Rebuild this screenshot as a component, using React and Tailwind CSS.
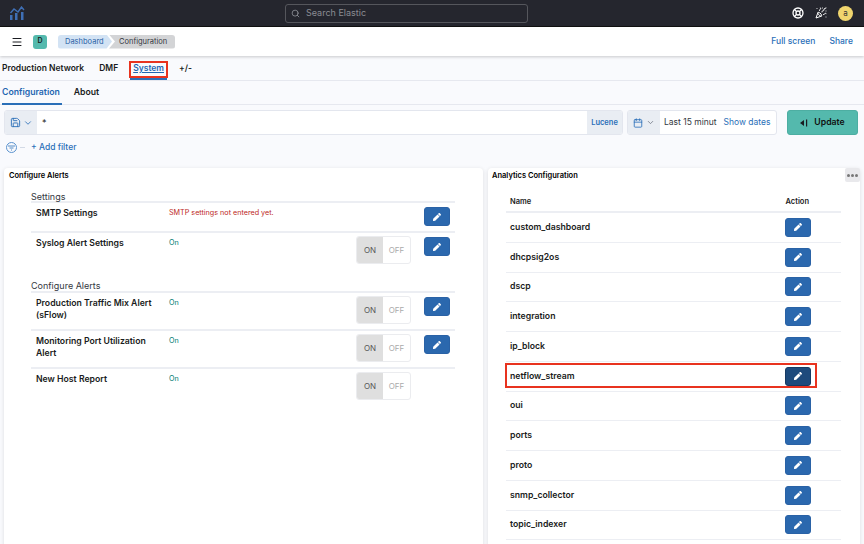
import React from 'react';
import { Calendar, ChevronDown, LifeBuoy, Menu, PartyPopper, Save, Search } from 'lucide-react';
import { FaPen } from 'react-icons/fa';

const Logo = () => (
  <svg width="16" height="15" viewBox="0 0 16 15" fill="none">
    <path d="M1 14V9h2.5v5zM6 14V7h2.5v7zM12 14V6h2.5v8z" fill="#3f6fb5" />
    <path d="M1.5 7 5 3l4 3 3.5-5 2.5 3" stroke="#3f6fb5" strokeWidth="1.4" />
  </svg>
);

const EditButton = ({ dark }) => (
  <button
    className={`w-[26px] h-[19px] shrink-0 rounded-[3px] border flex items-center justify-center text-white ${
      dark ? 'bg-[#1d4a7c] border-[#163a63]' : 'bg-[#2b68ae] border-[#2a62a6]'
    }`}
  >
    <FaPen className="w-[8px] h-[8px]" />
  </button>
);

const Toggle = () => (
  <div className="w-[55px] h-[28px] shrink-0 flex rounded-[3px] border border-[#ebecef] text-[8px] bg-white overflow-hidden">
    <div className="w-[26px] bg-[#dfdfdf] text-[#555] flex items-center justify-center">ON</div>
    <div className="flex-1 text-[#aaa] flex items-center justify-center">OFF</div>
  </div>
);

const AlertRow = ({ name, status, error, toggle, edit, height }) => (
  <div className={`flex border-t-2 border-[#eceef3] pl-[5px] pr-[5px] ${height}`}>
    <div className="w-[125px] mr-[8px] pt-[4px] text-[8.7px] leading-[12px] font-semibold text-[#1a1c21]">{name}</div>
    <div className={`w-[187px] pt-[4px] text-[7.2px] leading-[12px] ${error ? 'text-[#bd271e]' : 'text-[#017d73]'}`}>
      {status}
    </div>
    <div className="w-[68px] pt-[3px]">{toggle && <Toggle />}</div>
    <div className="pt-[4px]">{edit && <EditButton />}</div>
  </div>
);

const analytics = [
  'custom_dashboard',
  'dhcpsig2os',
  'dscp',
  'integration',
  'ip_block',
  'netflow_stream',
  'oui',
  'ports',
  'proto',
  'snmp_collector',
  'topic_indexer',
];

const App = () => {
  return (
    <div className="w-[864px] h-[544px] overflow-hidden bg-[#f9fafd] font-['Inter',sans-serif] text-[#1a1c21] antialiased">
      {/* Top bar */}
      <header className="h-[27px] bg-[#25262e] border-b border-[#111] flex items-center pl-[9px] pr-[11px]">
        <Logo />
        <div className="ml-[260px] w-[243px] h-[19px] rounded-[3px] border border-[#55565c] flex items-center px-[5px] gap-[6px] text-[9px] text-[#8a8c93]">
          <Search className="w-[9px] h-[9px] text-[#9a9ca3]" />
          Search Elastic
        </div>
        <div className="ml-auto flex items-center gap-[11px] text-white">
          <LifeBuoy className="w-[12px] h-[12px]" strokeWidth={2.6} />
          <PartyPopper className="w-[12px] h-[12px]" />
          <div className="w-[15px] h-[15px] rounded-full bg-[#f0d56e] text-[#333] text-[8px] flex items-center justify-center">
            a
          </div>
        </div>
      </header>

      {/* Breadcrumb bar */}
      <div className="h-[29px] bg-white shadow-[0_1px_3px_rgba(0,0,0,0.2)] relative flex items-center pl-[11px] pr-[11px]">
        <Menu className="w-[12px] h-[12px] text-[#1a1c21]" />
        <div className="ml-[10px] w-[14px] h-[14px] rounded-[3px] bg-[#54b9ad] text-[7px] font-semibold flex items-center justify-center">
          D
        </div>
        <div className="ml-[11px] flex items-center text-[7.5px]">
          <div className="w-[54px] h-[14px] pl-[7px] flex items-center bg-[#d3e3f4] text-[#2a62a6] rounded-l-[3px] [clip-path:polygon(0_0,90%_0,100%_50%,90%_100%,0_100%)]">
            Dashboard
          </div>
          <div className="-ml-[3px] w-[66px] h-[14px] pl-[10px] flex items-center bg-[#d3d4d6] text-[#343741] rounded-r-[3px] [clip-path:polygon(0_0,100%_0,100%_100%,0_100%,6px_50%)]">
            Configuration
          </div>
        </div>
        <div className="ml-auto flex gap-[14px] text-[8.5px] text-[#2a6fb8] font-medium">
          <span>Full screen</span>
          <span>Share</span>
        </div>
      </div>

      {/* Main tabs */}
      <div className="h-[25px] border-b border-[#e6e8ef] flex items-center pl-[2px] text-[8.5px] font-semibold text-[#1a1c21]">
        <span className="pt-px">Production Network</span>
        <span className="ml-[15px] pt-px">DMF</span>
        <div className="ml-[12px] relative h-full flex items-center pt-[3px] px-[3px] border-b-2 border-[#2a6fb8] text-[#1f66b1]">
          <span className="underline">System</span>
          <div className="absolute left-[-1px] right-[-1px] top-[5px] h-[17px] border-2 border-[#e8331f]" />
        </div>
        <span className="ml-[12px] pt-px">+/-</span>
      </div>

      {/* Sub tabs */}
      <div className="h-[24px] border-b border-[#e6e8ef] flex items-stretch pl-[2px] text-[8.7px] font-semibold">
        <div className="flex items-center pt-px border-b-2 border-[#2a6fb8] text-[#1f66b1] -mb-px pr-[2px]">Configuration</div>
        <div className="ml-[12px] pt-px flex items-center">About</div>
      </div>

      {/* Query bar */}
      <div className="mt-[5px] h-[25px] flex pl-[4px] pr-[6px]">
        <div className="w-[619px] flex rounded-[3px] border border-[#e3e6ee] bg-white overflow-hidden">
          <div className="w-[32px] bg-[#e9edf3] flex items-center justify-center gap-[2px] text-[#2a6fb8]">
            <Save className="w-[11px] h-[11px]" />
            <ChevronDown className="w-[10px] h-[10px]" />
          </div>
          <div className="flex-1 pl-[5px] pt-[5px] text-[9px]">*</div>
          <div className="w-[35px] bg-[#e9edf3] text-[#2a6fb8] text-[7.5px] font-semibold flex items-center justify-center">
            Lucene
          </div>
        </div>
        <div className="ml-[4px] w-[150px] flex rounded-[3px] border border-[#e3e6ee] bg-white overflow-hidden text-[8.5px]">
          <div className="w-[32px] bg-[#e9edf3] flex items-center justify-center gap-[3px] text-[#2a6fb8]">
            <Calendar className="w-[10px] h-[10px]" />
            <ChevronDown className="w-[9px] h-[9px] text-[#69707d]" />
          </div>
          <span className="ml-[4px] self-center text-[#343741] whitespace-nowrap">Last 15 minut</span>
          <span className="ml-[7px] self-center text-[#2a6fb8] whitespace-nowrap">Show dates</span>
        </div>
        <button className="ml-[10px] w-[71px] rounded-[3px] bg-[#54b9ad] border border-[#4daea2] flex items-center justify-center gap-[5px] text-[8.7px] font-semibold text-[#111]">
          <svg width="9" height="8" viewBox="0 0 9 8" fill="#1a1c21">
            <path d="M0 4l4-3v6zM6 0.5h1.2v7H6z" />
          </svg>
          Update
        </button>
      </div>

      {/* Filter row */}
      <div className="h-[33px] pb-[8px] flex items-center pl-[6px] text-[8.5px] text-[#2a6fb8] font-medium">
        <div className="w-[11px] h-[11px] rounded-full border border-[#5b93cf] flex items-center justify-center">
          <svg width="7" height="6" viewBox="0 0 7 6" fill="none" stroke="#2a6fb8" strokeWidth="0.8">
            <path d="M0 1h7M1.5 3h4M3 5h1" />
          </svg>
        </div>
        <div className="ml-[3px] w-[5px] h-px bg-[#d3dae6]" />
        <span className="ml-[6px]">+ Add filter</span>
      </div>

      {/* Panels */}
      <div className="flex items-start gap-[5px] pl-[4px]">
        <section className="w-[479px] h-[400px] bg-white rounded-[4px] shadow-[0_1px_4px_rgba(0,0,0,0.12)]">
          <h2 className="pl-[5px] pt-[3px] text-[7.5px] leading-[10px] font-semibold text-black">Configure Alerts</h2>
          <div className="pl-[27px] w-[451px] pt-[11px]">
            <div className="text-[9px] leading-[9px] text-[#343741]">Settings</div>
            <AlertRow name="SMTP Settings" status="SMTP settings not entered yet." error edit height="h-[30px]" />
            <AlertRow name="Syslog Alert Settings" status="On" toggle edit height="h-[50px]" />
            <div className="text-[9px] leading-[10px] text-[#343741]">Configure Alerts</div>
            <AlertRow name="Production Traffic Mix Alert (sFlow)" status="On" toggle edit height="h-[38px]" />
            <AlertRow name="Monitoring Port Utilization Alert" status="On" toggle edit height="h-[38px]" />
            <AlertRow name="New Host Report" status="On" toggle height="h-[38px]" />
          </div>
        </section>

        <section className="relative w-[372px] h-[400px] bg-white rounded-[4px] shadow-[0_1px_4px_rgba(0,0,0,0.12)]">
          <div className="absolute right-0 top-0 w-[15px] h-[14px] bg-[#e9e9ec] rounded-[2px] flex items-center justify-center gap-px">
            <span className="w-[3px] h-[3px] rounded-full bg-[#777]" />
            <span className="w-[3px] h-[3px] rounded-full bg-[#777]" />
            <span className="w-[3px] h-[3px] rounded-full bg-[#777]" />
          </div>
          <h2 className="pl-[4px] pt-[3px] text-[7.5px] leading-[10px] font-semibold text-black">Analytics Configuration</h2>
          <div className="ml-[18px] w-[335px] pt-[15px]">
            <div className="h-[17px] flex justify-between pl-[4px] pr-[32px] text-[7.5px] font-semibold border-b-2 border-[#eceef3]">
              <span>Name</span>
              <span>Action</span>
            </div>
            {analytics.map((name) => {
              const selected = name === 'netflow_stream';
              return (
                <div
                  key={name}
                  className="relative h-[29.75px] pl-[4px] pr-[30px] flex items-center justify-between border-b border-[#eceef3] text-[8.7px] font-semibold"
                >
                  <span>{name}</span>
                  <EditButton dark={selected} />
                  {selected && <div className="absolute left-[-1px] right-[24px] top-[1px] h-[25px] border-2 border-[#e8331f]" />}
                </div>
              );
            })}
          </div>
        </section>
      </div>
    </div>
  );
};

export default App;
